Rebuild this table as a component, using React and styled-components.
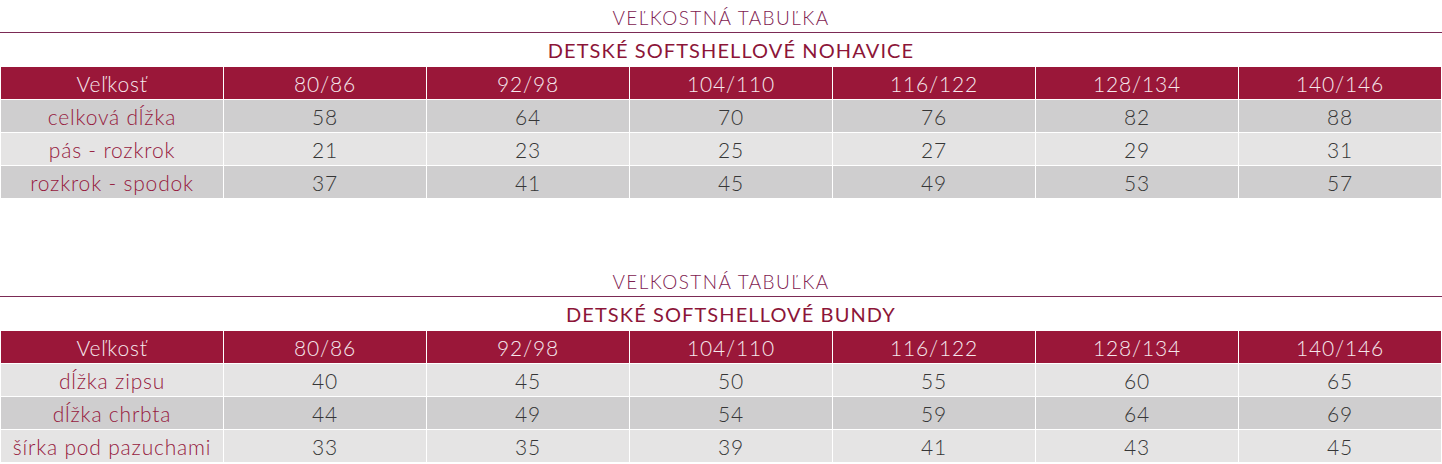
import React from "react";
import styled, { createGlobalStyle } from "styled-components";

const Global = createGlobalStyle`
  html, body { margin: 0; padding: 0; background: #ffffff; }
  body { font-family: Lato, "Open Sans", sans-serif; }
`;

const Page = styled.div`
  display: flex;
  flex-direction: column;
  gap: 66px;
  width: 1442px;
`;

const Section = styled.section`
  display: flex;
  flex-direction: column;
`;

const Title = styled.div`
  height: 33px;
  border-bottom: 1px solid #7b2a55;
  box-sizing: border-box;
  display: flex;
  align-items: center;
  justify-content: center;
  padding-top: 3px;
  color: #7e2150;
  font-size: 19px;
  font-weight: 300;
  letter-spacing: 1.4px;
`;

const Subtitle = styled.div`
  height: 34px;
  display: flex;
  align-items: center;
  justify-content: center;
  color: #8c1538;
  font-size: 20px;
  font-weight: 400;
  letter-spacing: 1.1px;
  padding: 0 0 1px 20px;
  box-sizing: border-box;
`;

const Grid = styled.div`
  display: grid;
  grid-template-columns: 222px repeat(6, 1fr);
  grid-auto-rows: 32px;
  gap: 1px;
  padding: 0 1px;
`;

const Cell = styled.div`
  display: flex;
  align-items: center;
  justify-content: center;
  font-size: 21px;
  font-weight: 300;
  letter-spacing: 0.8px;
  padding-top: 1px;
  box-sizing: border-box;
  white-space: nowrap;
  background: ${(p) => (p.$head ? "#9a1739" : p.$dark ? "#cfcecf" : "#e5e4e4")};
  color: ${(p) => (p.$head ? "#f6e8ec" : p.$label ? "#961a3e" : "#363636")};
`;

const sizes = ["80/86", "92/98", "104/110", "116/122", "128/134", "140/146"];

const tables = [
  {
    subtitle: "DETSKÉ SOFTSHELLOVÉ NOHAVICE",
    darkFirst: true,
    rows: [
      ["celková dĺžka", 58, 64, 70, 76, 82, 88],
      ["pás - rozkrok", 21, 23, 25, 27, 29, 31],
      ["rozkrok - spodok", 37, 41, 45, 49, 53, 57],
    ],
  },
  {
    subtitle: "DETSKÉ SOFTSHELLOVÉ BUNDY",
    darkFirst: false,
    rows: [
      ["dĺžka zipsu", 40, 45, 50, 55, 60, 65],
      ["dĺžka chrbta", 44, 49, 54, 59, 64, 69],
      ["šírka pod pazuchami", 33, 35, 39, 41, 43, 45],
    ],
  },
];

function SizeTable({ subtitle, rows, darkFirst }) {
  return (
    <Section>
      <Title>VEĽKOSTNÁ TABUĽKA</Title>
      <Subtitle>{subtitle}</Subtitle>
      <Grid>
        <Cell $head>Veľkosť</Cell>
        {sizes.map((s) => (
          <Cell $head key={s}>{s}</Cell>
        ))}
        {rows.map((r, i) => {
          const dark = darkFirst ? i % 2 === 0 : i % 2 === 1;
          return r.map((v, j) => (
            <Cell key={`${i}-${j}`} $dark={dark} $label={j === 0}>
              {v}
            </Cell>
          ));
        })}
      </Grid>
    </Section>
  );
}

export default function App() {
  return (
    <>
      <Global />
      <Page>
        {tables.map((t) => (
          <SizeTable key={t.subtitle} {...t} />
        ))}
      </Page>
    </>
  );
}
